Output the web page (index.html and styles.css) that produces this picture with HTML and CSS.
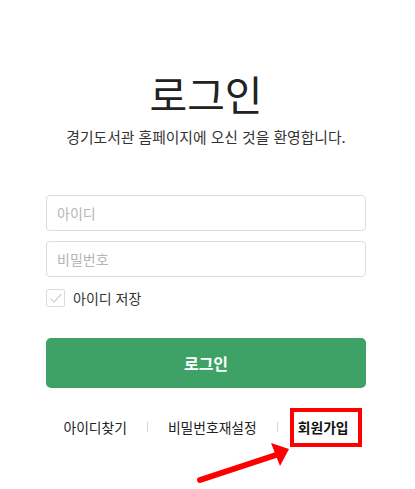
FILE: index.html
```html
<!DOCTYPE html>
<html lang="ko">
<head>
<meta charset="utf-8">
<title>로그인</title>
<link rel="stylesheet" href="styles.css">
</head>
<body>
<div class="page">
  <main class="login">
    <h1 class="title">로그인</h1>
    <p class="subtitle">경기도서관 홈페이지에 오신 것을 환영합니다.</p>
    <form class="form">
      <input class="field" type="text" placeholder="아이디">
      <input class="field" type="password" placeholder="비밀번호">
      <label class="remember">
        <span class="check">
          <svg width="14" height="12" viewBox="0 0 14 12"><path d="M1.5 6.5 L5 10 L12.5 2" fill="none" stroke="#d6d6d6" stroke-width="1.4"/></svg>
        </span>
        <span class="remember-text">아이디 저장</span>
      </label>
      <button class="submit" type="button">로그인</button>
    </form>
    <nav class="links">
      <a class="link">아이디찾기</a>
      <span class="sep"></span>
      <a class="link">비밀번호재설정</a>
      <span class="sep"></span>
      <a class="link link-strong">회원가입</a>
    </nav>
  </main>
  <svg class="arrow" width="415" height="489" viewBox="0 0 415 489">
    <line x1="200" y1="480" x2="276" y2="455" stroke="#ff0000" stroke-width="6" stroke-linecap="round"/>
    <polygon points="271,443 289,449 280,466" fill="#ff0000"/>
  </svg>
</div>
</body>
</html>
```
FILE: styles.css
```css
* { box-sizing: border-box; }
html, body { margin: 0; padding: 0; background: #fff; }
body {
  font-family: "Noto Sans CJK KR", "Noto Sans", sans-serif;
  color: #333;
}
.page {
  position: relative;
  width: 415px;
  height: 489px;
  overflow: hidden;
  padding-right: 3px;
}
.login {
  width: 320px;
  margin: 0 auto;
  padding-top: 70px;
  display: flex;
  flex-direction: column;
  align-items: stretch;
}
.title {
  margin: 0;
  font-size: 41px;
  line-height: 47px;
  font-weight: 400;
  color: #222;
  text-align: center;
}
.subtitle {
  margin: 10px 0 0;
  font-size: 14.8px;
  line-height: 20px;
  text-align: center;
  color: #333;
}
.form {
  margin-top: 48px;
  display: flex;
  flex-direction: column;
}
.field {
  height: 36px;
  border: 1px solid #dcdcdc;
  border-radius: 4px;
  padding: 0 10px;
  font-family: inherit;
  font-size: 14px;
  color: #333;
  outline: none;
}
.field + .field { margin-top: 10px; }
.field::placeholder { color: #b5b5b5; }
.remember {
  margin-top: 12px;
  display: flex;
  align-items: center;
  gap: 8px;
  height: 18px;
}
.check {
  width: 19px;
  height: 18px;
  border: 1px solid #dcdcdc;
  border-radius: 2px;
  display: flex;
  align-items: center;
  justify-content: center;
}
.remember-text {
  font-size: 14px;
  line-height: 18px;
  color: #333;
}
.submit {
  margin-top: 31px;
  height: 50px;
  border: 0;
  border-radius: 5px;
  background: #3ea266;
  color: #fff;
  font-family: inherit;
  font-size: 16px;
  font-weight: 700;
}
.links {
  margin-top: 29px;
  display: flex;
  justify-content: center;
  align-items: center;
  gap: 20px;
  height: 20px;
}
.link {
  font-size: 13.8px;
  line-height: 20px;
  color: #222;
}
.link-strong {
  position: relative;
  font-weight: 700;
  color: #111;
}
.link-strong::after {
  content: "";
  position: absolute;
  left: -8px;
  right: -13px;
  top: -9px;
  bottom: -10px;
  border: 4px solid #ff0000;
}
.sep {
  width: 1px;
  height: 10px;
  background: #d5d5d5;
}
.arrow {
  position: absolute;
  left: 0;
  top: 0;
  pointer-events: none;
}
```
